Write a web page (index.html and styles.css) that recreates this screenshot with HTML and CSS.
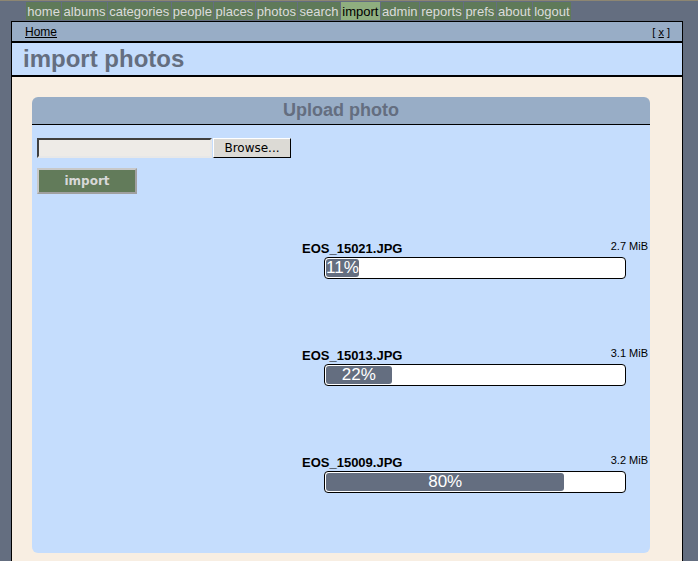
FILE: index.html
```html
<!DOCTYPE html>
<html>
<head>
    <title>import photos</title>
    <link rel="stylesheet" href="styles.css">
</head>
<body>
    <div id="menu">
        <a class="menuItem">home</a>
        <a class="menuItem">albums</a>
        <a class="menuItem">categories</a>
        <a class="menuItem">people</a>
        <a class="menuItem">places</a>
        <a class="menuItem">photos</a>
        <a class="menuItem">search</a>
        <a class="menuItem active">import</a>
        <a class="menuItem">admin</a>
        <a class="menuItem">reports</a>
        <a class="menuItem">prefs</a>
        <a class="menuItem">about</a>
        <a class="menuItem">logout</a>
    </div>
    <div id="mainDiv">
        <div id="crumbDiv">
            <a class="crumb">Home</a>
            <span class="close">[ <u>x</u> ]</span>
        </div>
        <h1 id="title">import photos</h1>
        <div id="contentDiv">
            <div class="panel">
                <div class="panelHead">Upload photo</div>
                <div class="panelBody">
                    <div class="fileRow">
                        <div class="fileField"></div>
                        <button class="browse">Browse...</button>
                    </div>
                    <button class="importBtn">import</button>
                    <div class="uploads">
                        <div class="upload">
                            <div class="uploadHead">
                                <span class="fileName">EOS_15021.JPG</span>
                                <span class="fileSize">2.7 MiB</span>
                            </div>
                            <div class="bar"><div class="fill" style="width: 11%">11%</div></div>
                        </div>
                        <div class="upload">
                            <div class="uploadHead">
                                <span class="fileName">EOS_15013.JPG</span>
                                <span class="fileSize">3.1 MiB</span>
                            </div>
                            <div class="bar"><div class="fill" style="width: 22%">22%</div></div>
                        </div>
                        <div class="upload">
                            <div class="uploadHead">
                                <span class="fileName">EOS_15009.JPG</span>
                                <span class="fileSize">3.2 MiB</span>
                            </div>
                            <div class="bar"><div class="fill" style="width: 80%">80%</div></div>
                        </div>
                    </div>
                </div>
            </div>
        </div>
    </div>
</body>
</html>
```

FILE: styles.css
```css
body{
    margin: 0px;
    background-color: #646e80;
    border-top: 1px solid #8d8672;
    font-family: "Liberation Sans", Arial, sans-serif;
    height: 560px;
    overflow: hidden;
}

#menu{
    display: flex;
    gap: 1px;
    height: 18px;
    margin-top: 1px;
    padding-left: 26px;
}

.menuItem{
    background-color: #5f7a59;
    color: #dcdcdc;
    font-size: 13px;
    line-height: 19px;
    padding: 0px 1.35px;
}

.menuItem.active{
    background-color: #8fae7f;
    color: #000000;
}

#mainDiv{
    width: 670px;
    margin-top: 1px;
    margin-left: 11px;
    border: 1px solid #000000;
    border-bottom: none;
}

#crumbDiv{
    display: flex;
    justify-content: space-between;
    align-items: center;
    height: 19px;
    padding: 0px 12px 0px 13px;
    background-color: #98adc6;
    border-bottom: 2px solid #000000;
}

.crumb{
    color: #000000;
    font-size: 12px;
    text-decoration: underline;
}

.close{
    font-size: 11px;
    color: #000000;
}

#title{
    margin: 0px;
    height: 32px;
    line-height: 32px;
    padding-left: 11px;
    background-color: #c5ddfd;
    color: #646e80;
    font-size: 24px;
    border-bottom: 2px solid #000000;
}

#contentDiv{
    background-color: #f8eee2;
    padding: 20px 0px 0px 20px;
    height: 465px;
}

.panel{
    width: 618px;
}

.panelHead{
    height: 27px;
    line-height: 27px;
    background-color: #98adc6;
    border-radius: 6px 6px 0px 0px;
    border-bottom: 1px solid #000000;
    text-align: center;
    font-weight: bold;
    font-size: 18px;
    color: #646e80;
}

.panelBody{
    height: 415px;
    padding: 13px 0px 0px 5px;
    background-color: #c5ddfd;
    border-radius: 0px 0px 6px 6px;
}

.fileRow{
    display: flex;
    height: 20px;
}

.fileField{
    width: 171px;
    height: 16px;
    background-color: #eeebe7;
    border: 2px solid;
    border-color: #404040 #e8e8e8 #e8e8e8 #404040;
}

.browse{
    width: 78px;
    height: 20px;
    margin-left: 1px;
    padding: 0px;
    background-color: #dcdad5;
    border: 1px solid;
    border-color: #ffffff #000000 #000000 #ffffff;
    font-family: "DejaVu Sans", sans-serif;
    font-size: 12px;
    color: #000000;
}

.importBtn{
    display: block;
    width: 100px;
    height: 26px;
    margin-top: 10px;
    background-color: #627b5a;
    border: 2px solid;
    border-color: #c8c8c8 #a0a0a0 #a0a0a0 #c8c8c8;
    color: #d8d8d8;
    font-family: "DejaVu Sans", sans-serif;
    font-weight: bold;
    font-size: 12px;
}

.uploads{
    width: 346px;
    margin-top: 46px;
    margin-left: 265px;
}

.upload{
    height: 107px;
}

.uploadHead{
    display: flex;
    justify-content: space-between;
    align-items: flex-start;
    height: 17px;
}

.fileName{
    font-weight: bold;
    font-size: 13px;
    color: #000000;
    line-height: 17px;
}

.fileSize{
    font-size: 11px;
    color: #000000;
    line-height: 13px;
}

.bar{
    width: 298px;
    height: 18px;
    margin-left: 22px;
    padding: 1px;
    background-color: #ffffff;
    border: 1px solid #000000;
    border-radius: 4px;
}

.fill{
    height: 18px;
    background-color: #646e80;
    border-radius: 3px;
    color: #ffffff;
    font-size: 17px;
    line-height: 18px;
    text-align: center;
    white-space: nowrap;
}
```
